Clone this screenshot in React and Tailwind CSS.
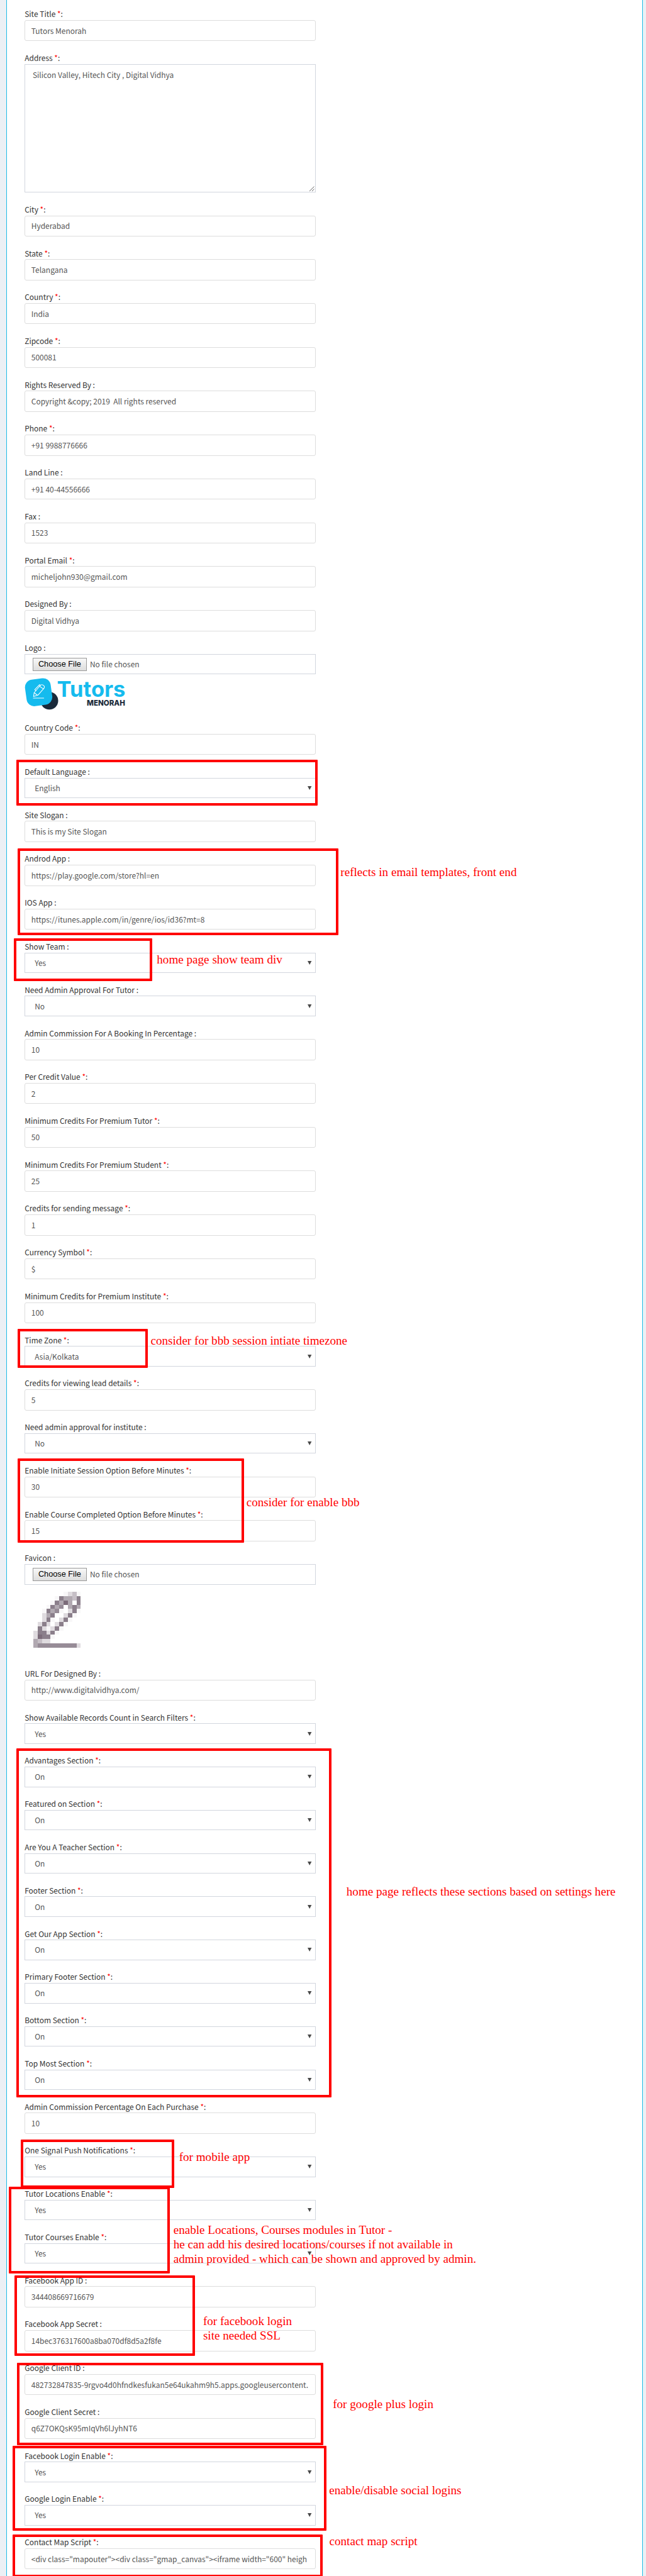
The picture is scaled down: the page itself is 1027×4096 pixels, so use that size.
const FIELDS = [
  { label: 'Site Title', req: true, value: 'Tutors Menorah' },
  { label: 'Address', req: true, value: 'Silicon Valley, Hitech City , Digital Vidhya', kind: 'area' },
  { label: 'City', req: true, value: 'Hyderabad' },
  { label: 'State', req: true, value: 'Telangana' },
  { label: 'Country', req: true, value: 'India' },
  { label: 'Zipcode', req: true, value: '500081' },
  { label: 'Rights Reserved By', value: 'Copyright &copy; 2019  All rights reserved' },
  { label: 'Phone', req: true, value: '+91 9988776666' },
  { label: 'Land Line', value: '+91 40-44556666' },
  { label: 'Fax', value: '1523' },
  { label: 'Portal Email', req: true, value: 'micheljohn930@gmail.com' },
  { label: 'Designed By', value: 'Digital Vidhya' },
  { label: 'Logo', kind: 'logo' },
  { label: 'Country Code', req: true, value: 'IN' },
  { label: 'Default Language', value: 'English', kind: 'select' },
  { label: 'Site Slogan', value: 'This is my Site Slogan' },
  { label: 'Androd App', value: 'https://play.google.com/store?hl=en' },
  { label: 'IOS App', value: 'https://itunes.apple.com/in/genre/ios/id36?mt=8' },
  { label: 'Show Team', value: 'Yes', kind: 'select' },
  { label: 'Need Admin Approval For Tutor', value: 'No', kind: 'select' },
  { label: 'Admin Commission For A Booking In Percentage', value: '10' },
  { label: 'Per Credit Value', req: true, value: '2' },
  { label: 'Minimum Credits For Premium Tutor', req: true, value: '50' },
  { label: 'Minimum Credits For Premium Student', req: true, value: '25' },
  { label: 'Credits for sending message', req: true, value: '1' },
  { label: 'Currency Symbol', req: true, value: '$' },
  { label: 'Minimum Credits for Premium Institute', req: true, value: '100' },
  { label: 'Time Zone', req: true, value: 'Asia/Kolkata', kind: 'select' },
  { label: 'Credits for viewing lead details', req: true, value: '5' },
  { label: 'Need admin approval for institute', value: 'No', kind: 'select' },
  { label: 'Enable Initiate Session Option Before Minutes', req: true, value: '30' },
  { label: 'Enable Course Completed Option Before Minutes', req: true, value: '15' },
  { label: 'Favicon', kind: 'favicon' },
  { label: 'URL For Designed By', value: 'http://www.digitalvidhya.com/' },
  { label: 'Show Available Records Count in Search Filters', req: true, value: 'Yes', kind: 'select' },
  { label: 'Advantages Section', req: true, value: 'On', kind: 'select' },
  { label: 'Featured on Section', req: true, value: 'On', kind: 'select' },
  { label: 'Are You A Teacher Section', req: true, value: 'On', kind: 'select' },
  { label: 'Footer Section', req: true, value: 'On', kind: 'select' },
  { label: 'Get Our App Section', req: true, value: 'On', kind: 'select' },
  { label: 'Primary Footer Section', req: true, value: 'On', kind: 'select' },
  { label: 'Bottom Section', req: true, value: 'On', kind: 'select' },
  { label: 'Top Most Section', req: true, value: 'On', kind: 'select' },
  { label: 'Admin Commission Percentage On Each Purchase', req: true, value: '10' },
  { label: 'One Signal Push Notifications', req: true, value: 'Yes', kind: 'select' },
  { label: 'Tutor Locations Enable', req: true, value: 'Yes', kind: 'select' },
  { label: 'Tutor Courses Enable', req: true, value: 'Yes', kind: 'select' },
  { label: 'Facebook App ID', value: '344408669716679' },
  { label: 'Facebook App Secret', value: '14bec376317600a8ba070df8d5a2f8fe' },
  { label: 'Google Client ID', value: '482732847835-9rgvo4d0hfndkesfukan5e64ukahm9h5.apps.googleusercontent.' },
  { label: 'Google Client Secret', value: 'q6Z7OKQsK95mIqVh6lJyhNT6' },
  { label: 'Facebook Login Enable', req: true, value: 'Yes', kind: 'select' },
  { label: 'Google Login Enable', req: true, value: 'Yes', kind: 'select' },
  { label: 'Contact Map Script', req: true, value: '<div class="mapouter"><div class="gmap_canvas"><iframe width="600" heigh' },
];

const FRAMES = [
  'left-[26px] top-[1208px] w-[478.5px] h-[72.6px]',
  'left-[28px] top-[1349.4px] w-[510px] h-[137.3px]',
  'left-[22px] top-[1491.8px] w-[219.7px] h-[67.9px]',
  'left-[27.8px] top-[2113px] w-[207.3px] h-[62px]',
  'left-[27.8px] top-[2319.4px] w-[360px] h-[133.8px]',
  'left-[25.5px] top-[2780px] w-[501.8px] h-[555.2px]',
  'left-[33.4px] top-[3402.2px] w-[243.6px] h-[76.4px]',
  'left-[14.4px] top-[3476.8px] w-[256px] h-[138.6px]',
  'left-[22.9px] top-[3618.2px] w-[287.5px] h-[128px]',
  'left-[26.8px] top-[3756.8px] w-[487.2px] h-[131px]',
  'left-[20px] top-[3888.6px] w-[498.7px] h-[135.7px]',
  'left-[20px] top-[4030px] w-[493px] h-[68px]',
];

const NOTES = [
  ['left-[541.3px] top-[1376px]', 'reflects in email templates, front end'],
  ['left-[249.3px] top-[1514.6px]', 'home page show team div'],
  ['left-[239.5px] top-[2120.5px]', 'consider for bbb session intiate timezone'],
  ['left-[391.7px] top-[2377.5px]', 'consider for enable bbb'],
  ['left-[550.8px] top-[2997px]', 'home page reflects these sections based on settings here'],
  ['left-[284.7px] top-[3419.3px]', 'for mobile app'],
  [
    'left-[275.7px] top-[3534.9px]',
    'enable Locations, Courses modules in Tutor -\nhe can add his desired locations/courses if not available in\nadmin provided - which can be shown and approved by admin.',
  ],
  ['left-[322.9px] top-[3680.2px]', 'for facebook login\nsite needed SSL'],
  ['left-[529.2px] top-[3811.8px]', 'for google plus login'],
  ['left-[523.3px] top-[3948.7px]', 'enable/disable social logins'],
  ['left-[523.5px] top-[4030px]', 'contact map script'],
];

// Favicon pixels: one letter per cell, '.' is transparent.
const TONES = { a: '#7c6c7a', b: '#8b7f8b', c: '#978c97', d: '#b1a9b1', e: '#c6bfc6', f: '#dfdbdf', g: '#f8f7f8' };
const FAVICON = [
  '.......gfeg',
  '.....gbddeb',
  '....gbdad.b',
  '...gbdc.dbd',
  '..gbdcg.fbg',
  '..fdb..fbg.',
  '..fbg.fbg..',
  '.fbf.fbg...',
  '.bfgfbg....',
  'fbbfbg.....',
  'fabbg......',
  'deff.......',
  'dcccccccccf',
];

function FaviconImage() {
  return (
    <div className="h-[114.7px] pt-[11.5px] pl-[13.7px]">
      <svg className="w-[75.4px] h-[89px]" viewBox="0 0 11 13" preserveAspectRatio="none" shapeRendering="crispEdges">
        {FAVICON.map((row, y) =>
          [...row].map((c, x) => (c === '.' ? null : <rect key={`${x}-${y}`} x={x} y={y} width="1" height="1" fill={TONES[c]} />)),
        )}
      </svg>
    </div>
  );
}

function LogoImage() {
  return (
    <div className="h-[58.3px] pt-[4px]">
      <svg className="w-[162px] h-[55px]" viewBox="15 18 508.8 172.7" preserveAspectRatio="none">
        <circle cx="139" cy="138" r="44" fill="#1a2a3a" />
        <rect x="21" y="29" width="129" height="133" rx="38" fill="#15bbee" transform="rotate(-8 85 96)" />
        <g fill="none" stroke="#fff" strokeWidth="3.4" strokeLinejoin="round" strokeLinecap="round">
          <path d="M60 117 L63 98 L93 62 Q99 55 108 60 Q118 66 112 76 L82 110 Z" />
          <path d="M63 98 L79 110 M90 66 L109 79 M72 88 L66 83 L90 58 L95 61" />
          <path d="M59 125 H111" />
        </g>
        <text x="177" y="120" textLength="342" lengthAdjust="spacingAndGlyphs" fill="#15bbee" fontSize="107" fontWeight="700" fontFamily="Inter, sans-serif">
          Tutors
        </text>
        <text x="326" y="162" textLength="191" lengthAdjust="spacingAndGlyphs" fill="#1a2a3a" fontSize="38" fontWeight="800" fontFamily="Inter, sans-serif">
          MENORAH
        </text>
      </svg>
    </div>
  );
}

function FileInput() {
  return (
    <div className="flex h-[32.49px] items-center border border-[#d2d6de] pl-[11.4px] text-[#555]">
      <span className="flex h-[21px] w-[86.6px] items-center justify-center border border-[#999] bg-linear-to-b from-[#f8f8f8] to-[#dddddd] font-['Liberation_Sans',sans-serif] text-[12.74px] text-black">
        Choose File
      </span>
      <span className="ml-[4.8px]">No file chosen</span>
    </div>
  );
}

function Control({ kind, value }) {
  if (kind === 'area') {
    return (
      <div className="flex h-[204.5px] items-start justify-between border border-[#d2d6de] pt-[6px] pl-[11.7px]">
        <span className="leading-[19px] text-[#555]">{value}</span>
        <svg className="size-[10px] self-end" viewBox="0 0 10 10" stroke="#555" strokeWidth="0.9">
          <path d="M1 9 L8.5 1.5 M5 9 L8.5 5.5" />
        </svg>
      </div>
    );
  }
  if (kind === 'select') {
    return (
      <div className="flex h-[32.49px] items-center justify-between border border-[#d2d6de] pr-[5px] pl-[15px] text-[#555]">
        <span>{value}</span>
        <svg className="h-[6px] w-[6.4px]" viewBox="0 0 7 6" preserveAspectRatio="none">
          <path d="M0 0 H7 L3.5 6 Z" fill="#4a4a4a" />
        </svg>
      </div>
    );
  }
  if (kind === 'logo') {
    return (
      <>
        <FileInput />
        <LogoImage />
      </>
    );
  }
  if (kind === 'favicon') {
    return (
      <>
        <FileInput />
        <FaviconImage />
      </>
    );
  }
  return (
    <div className="flex h-[33.44px] items-center overflow-hidden rounded-[3px] border border-[#dddddd] pl-[9.6px] text-[#555]">{value}</div>
  );
}

function Field({ label, req, kind, value }) {
  return (
    <div className="mb-[12.42px]">
      <div className="h-[23.9px] pt-[4.2px] leading-[20px] text-[#333]">
        {label} {req && <span className="text-[#ff0000]">*</span>}:
      </div>
      <Control kind={kind} value={value} />
    </div>
  );
}

export default function App() {
  return (
    <div className="relative flex h-[4096px] w-[1027px] overflow-hidden bg-white font-['Noto_Sans_CJK_SC',sans-serif] text-[11.97px] leading-[20px] whitespace-pre">
      <div className="w-[11px] shrink-0 border-r border-[#1dbbe6] bg-[#ecf0f5]" />
      <div className="flex-1 pt-[8.1px] pl-[28.2px]">
        <div className="w-[462.6px]">
          {FIELDS.map((f) => (
            <Field key={f.label} {...f} />
          ))}
        </div>
      </div>
      <div className="w-[6px] shrink-0 border-l border-[#1dbbe6] bg-[#ecf0f5]" />
      {FRAMES.map((c) => (
        <div key={c} className={`absolute rounded-[1px] border-4 border-[#ff0000] ${c}`} />
      ))}
      {NOTES.map(([c, text]) => (
        <div key={c} className={`absolute font-['Liberation_Serif',serif] text-[19.11px] leading-[22.93px] text-[#ff0000] ${c}`}>
          {text}
        </div>
      ))}
    </div>
  );
}
